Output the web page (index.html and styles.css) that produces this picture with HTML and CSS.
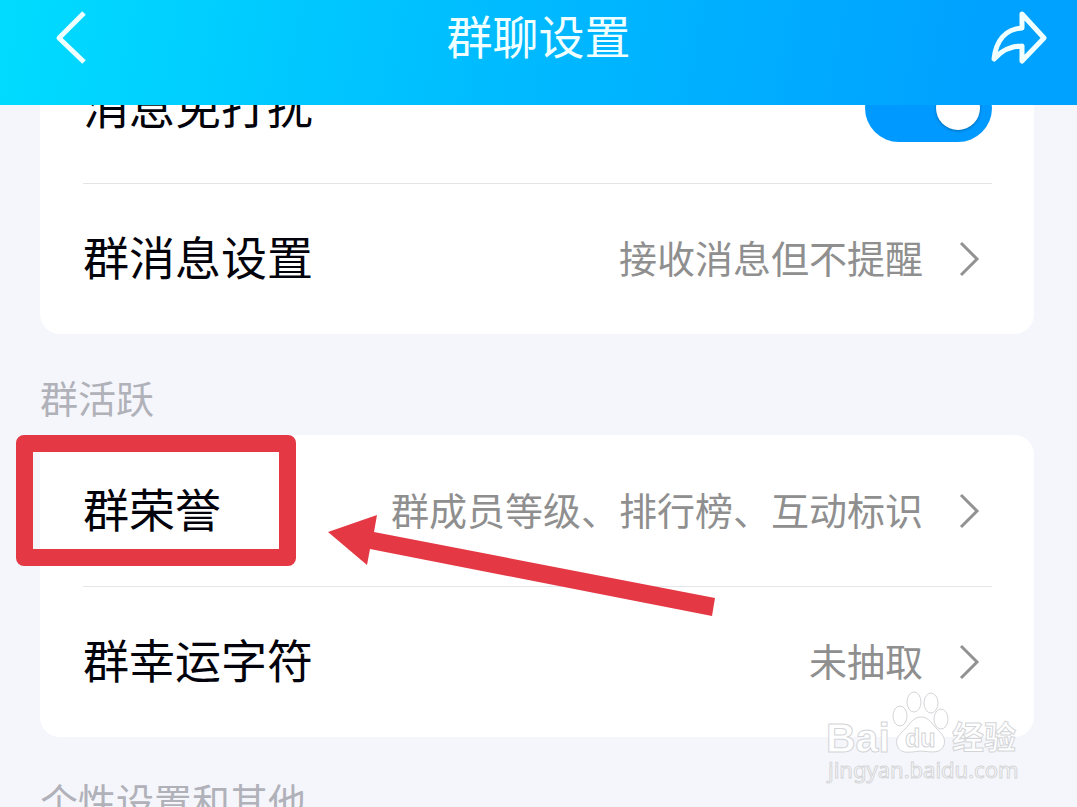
FILE: index.html
```html
<!DOCTYPE html>
<html lang="zh-CN">
<head>
    <meta charset="UTF-8">
    <meta name="viewport" content="width=device-width, initial-scale=1.0">
    <title>群聊设置</title>
    <link rel="stylesheet" href="styles.css">
</head>
<body>
    <header class="header">
        <button class="icon-button" type="button" aria-label="返回">
            <svg width="62" height="60" viewBox="0 0 62 60" fill="none" stroke="#f0ffff" stroke-width="5" stroke-linejoin="round">
                <path d="M54 5 L29 30 L54 54"/>
            </svg>
        </button>
        <h1>群聊设置</h1>
        <button class="icon-button" type="button" aria-label="分享">
            <svg width="62" height="60" viewBox="0 0 62 60" fill="none" stroke="#f0ffff" stroke-width="5" stroke-linejoin="round">
                <path d="M9 51 C11 33 20 21 37 20 V6 L59 30 L37 53 V38 C25 38 17 42 9 51 Z"/>
            </svg>
        </button>
    </header>

    <main class="content">
        <section class="card">
            <div class="row">
                <label class="name" for="mute">消息免打扰</label>
                <input class="switch" type="checkbox" id="mute" checked>
            </div>
            <a class="row" href="#">
                <span class="name">群消息设置</span>
                <span class="value">接收消息但不提醒</span>
                <svg class="chevron" width="22" height="38" viewBox="0 0 22 38"><path d="M3 3 L19 19 L3 35"/></svg>
            </a>
        </section>

        <h2>群活跃</h2>
        <section class="card">
            <a class="row" href="#">
                <span class="name">群荣誉</span>
                <span class="value">群成员等级、排行榜、互动标识</span>
                <svg class="chevron" width="22" height="38" viewBox="0 0 22 38"><path d="M3 3 L19 19 L3 35"/></svg>
            </a>
            <a class="row" href="#">
                <span class="name">群幸运字符</span>
                <span class="value">未抽取</span>
                <svg class="chevron" width="22" height="38" viewBox="0 0 22 38"><path d="M3 3 L19 19 L3 35"/></svg>
            </a>
            <div class="highlight"></div>
            <svg class="arrow" width="390" height="104" viewBox="0 0 390 104">
                <path fill="#e43945" d="M0 17 L49 0 L46 17 L387 83 L384 101 L42 34 L39 50 Z"/>
            </svg>
        </section>

        <h2>个性设置和其他</h2>
    </main>

    <svg class="watermark" width="204" height="104" viewBox="0 0 204 104">
        <g fill="#fff" stroke="#d4d5d8" stroke-width="1">
            <text class="logo" x="6" y="66" font-size="41">Bai</text>
            <ellipse cx="80" cy="30" rx="7" ry="10"/>
            <ellipse cx="94" cy="16" rx="7" ry="10"/>
            <ellipse cx="111" cy="17" rx="7" ry="10"/>
            <ellipse cx="121" cy="33" rx="7" ry="10"/>
            <path d="M101 31 C109 31 112 38 117 43 C122 48 126 52 124 59 C121 68 112 66 101 65 C90 66 80 69 77 59 C75 52 80 48 85 43 C90 38 93 31 101 31 Z"/>
            <text class="logo" x="85" y="61" font-size="25">du</text>
            <text class="logo" x="132" y="63" font-size="32">经验</text>
            <text class="site" x="8" y="92" font-size="22">jingyan.baidu.com</text>
        </g>
    </svg>
</body>
</html>
```
FILE: styles.css
```css
* {
    box-sizing: border-box;
}

body {
    margin: 0;
    height: 100vh;
    overflow: hidden;
    position: relative;
    background: #f5f6fb;
    color: #03030b;
    font-family: "Noto Sans CJK SC", sans-serif;
    font-size: 46px;
    line-height: 60px;
}

.header {
    position: sticky;
    top: 0;
    z-index: 2;
    display: flex;
    justify-content: space-between;
    align-items: center;
    height: 105px;
    padding: 0 30px 29px;
    background: linear-gradient(100deg, #00dcff, #00baff 48%, #00a2ff 90%);
    color: #f0ffff;
}

.header h1 {
    margin: 0;
    padding-bottom: 8px;
    font-size: 46px;
    font-weight: 400;
}

.icon-button {
    padding: 0;
    border: none;
    background: none;
    cursor: pointer;
}

.icon-button svg {
    display: block;
}

/* scrolled up a little, so the first row is under the header */
.content {
    margin-top: -73px;
    padding: 0 43px 0 40px;
}

.content h2 {
    margin: 0;
    padding: 39px 0 14px;
    color: #b0b1b9;
    font-size: 38px;
    font-weight: 400;
    line-height: 48px;
}

.card {
    position: relative;
    padding: 0 42px 0 43px;
    background: #fff;
    border-radius: 20px;
}

.row {
    display: flex;
    align-items: center;
    height: 150px;
    color: inherit;
    text-decoration: none;
}

.row:first-child {
    height: 152px;
    border-bottom: 1px solid #e4e5e8;
}

.name {
    padding-bottom: 8px;
}

.value {
    margin-left: auto;
    padding-bottom: 4px;
    color: #8f8f8f;
    font-size: 38px;
}

.chevron {
    margin: 0 12px 0 35px;
    fill: none;
    stroke: #929292;
    stroke-width: 3;
}

.switch {
    appearance: none;
    width: 127px;
    height: 68px;
    margin: 0 0 0 auto;
    padding: 12px;
    border-radius: 34px;
    background: #0099ff;
    cursor: pointer;
}

.switch::before {
    content: "";
    display: block;
    width: 44px;
    height: 44px;
    border-radius: 50%;
    background: #fff;
    box-shadow: 0 1px 3px rgba(0, 0, 0, 0.3);
}

.switch:checked::before {
    margin-left: auto;
}

.highlight {
    position: absolute;
    top: 0;
    left: -24px;
    width: 280px;
    height: 131px;
    border: 17px solid #e43945;
    border-radius: 8px;
    pointer-events: none;
}

.arrow {
    position: absolute;
    top: 80px;
    left: 288px;
    pointer-events: none;
}

.watermark {
    position: absolute;
    right: 53px;
    bottom: 17px;
    pointer-events: none;
}

.logo {
    font-family: "Liberation Sans", "Noto Sans CJK SC", sans-serif;
    font-weight: 700;
}

.site {
    font-family: "Noto Sans", sans-serif;
}
```
